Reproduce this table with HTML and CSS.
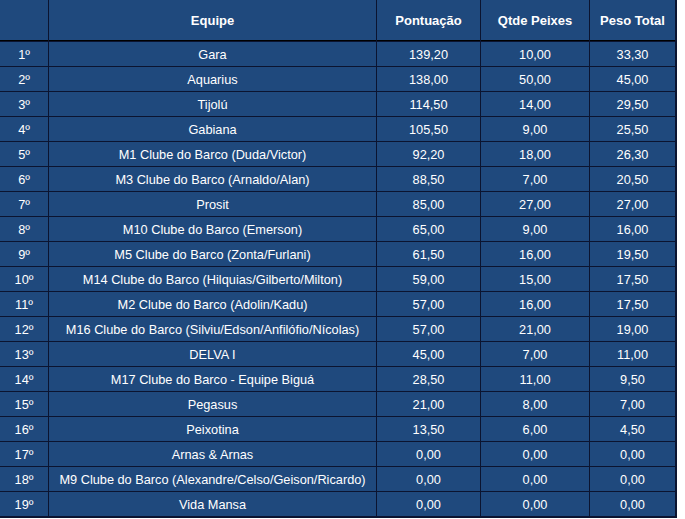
FILE: index.html
```html
<!DOCTYPE html>
<html lang="pt-BR">
<head>
<meta charset="utf-8">
<title>Classificação</title>
<link rel="stylesheet" href="styles.css">
</head>
<body>
<div class="board">
  <div class="grid">
    <div class="cell head"></div>
    <div class="cell head">Equipe</div>
    <div class="cell head">Pontuação</div>
    <div class="cell head">Qtde Peixes</div>
    <div class="cell head">Peso Total</div>

    <div class="cell">1º</div><div class="cell">Gara</div><div class="cell">139,20</div><div class="cell">10,00</div><div class="cell">33,30</div>
    <div class="cell">2º</div><div class="cell">Aquarius</div><div class="cell">138,00</div><div class="cell">50,00</div><div class="cell">45,00</div>
    <div class="cell">3º</div><div class="cell">Tijolú</div><div class="cell">114,50</div><div class="cell">14,00</div><div class="cell">29,50</div>
    <div class="cell">4º</div><div class="cell">Gabiana</div><div class="cell">105,50</div><div class="cell">9,00</div><div class="cell">25,50</div>
    <div class="cell">5º</div><div class="cell">M1 Clube do Barco (Duda/Victor)</div><div class="cell">92,20</div><div class="cell">18,00</div><div class="cell">26,30</div>
    <div class="cell">6º</div><div class="cell">M3 Clube do Barco (Arnaldo/Alan)</div><div class="cell">88,50</div><div class="cell">7,00</div><div class="cell">20,50</div>
    <div class="cell">7º</div><div class="cell">Prosit</div><div class="cell">85,00</div><div class="cell">27,00</div><div class="cell">27,00</div>
    <div class="cell">8º</div><div class="cell">M10 Clube do Barco (Emerson)</div><div class="cell">65,00</div><div class="cell">9,00</div><div class="cell">16,00</div>
    <div class="cell">9º</div><div class="cell">M5 Clube do Barco (Zonta/Furlani)</div><div class="cell">61,50</div><div class="cell">16,00</div><div class="cell">19,50</div>
    <div class="cell">10º</div><div class="cell">M14 Clube do Barco (Hilquias/Gilberto/Milton)</div><div class="cell">59,00</div><div class="cell">15,00</div><div class="cell">17,50</div>
    <div class="cell">11º</div><div class="cell">M2 Clube do Barco (Adolin/Kadu)</div><div class="cell">57,00</div><div class="cell">16,00</div><div class="cell">17,50</div>
    <div class="cell">12º</div><div class="cell">M16 Clube do Barco (Silviu/Edson/Anfilófio/Nícolas)</div><div class="cell">57,00</div><div class="cell">21,00</div><div class="cell">19,00</div>
    <div class="cell">13º</div><div class="cell">DELVA I</div><div class="cell">45,00</div><div class="cell">7,00</div><div class="cell">11,00</div>
    <div class="cell">14º</div><div class="cell">M17 Clube do Barco - Equipe Biguá</div><div class="cell">28,50</div><div class="cell">11,00</div><div class="cell">9,50</div>
    <div class="cell">15º</div><div class="cell">Pegasus</div><div class="cell">21,00</div><div class="cell">8,00</div><div class="cell">7,00</div>
    <div class="cell">16º</div><div class="cell">Peixotina</div><div class="cell">13,50</div><div class="cell">6,00</div><div class="cell">4,50</div>
    <div class="cell">17º</div><div class="cell">Arnas &amp; Arnas</div><div class="cell">0,00</div><div class="cell">0,00</div><div class="cell">0,00</div>
    <div class="cell">18º</div><div class="cell">M9 Clube do Barco (Alexandre/Celso/Geison/Ricardo)</div><div class="cell">0,00</div><div class="cell">0,00</div><div class="cell">0,00</div>
    <div class="cell">19º</div><div class="cell">Vida Mansa</div><div class="cell">0,00</div><div class="cell">0,00</div><div class="cell">0,00</div>
  </div>
</div>
</body>
</html>
```

FILE: styles.css
```css
html, body {
  margin: 0;
  padding: 0;
  background: #ffffff;
}

.board {
  display: inline-block;
  background: #0b1430;
  border-right: 2px solid #0b1430;
  border-bottom: 2px solid #0b1430;
}

.grid {
  display: grid;
  grid-template-columns: 48px 327px 103px 108px 85px;
  grid-template-rows: 41px;
  grid-auto-rows: 24px;
  gap: 1px;
  background: #0b1430;
  font-family: "Liberation Sans", Arial, sans-serif;
  font-size: 12.75px;
  color: #ffffff;
}

.cell {
  background: #1f497d;
  display: flex;
  align-items: center;
  justify-content: center;
  white-space: nowrap;
}

.head {
  font-weight: bold;
  font-size: 13px;
  border-bottom: 1px solid #000000;
  box-sizing: border-box;
}
```
